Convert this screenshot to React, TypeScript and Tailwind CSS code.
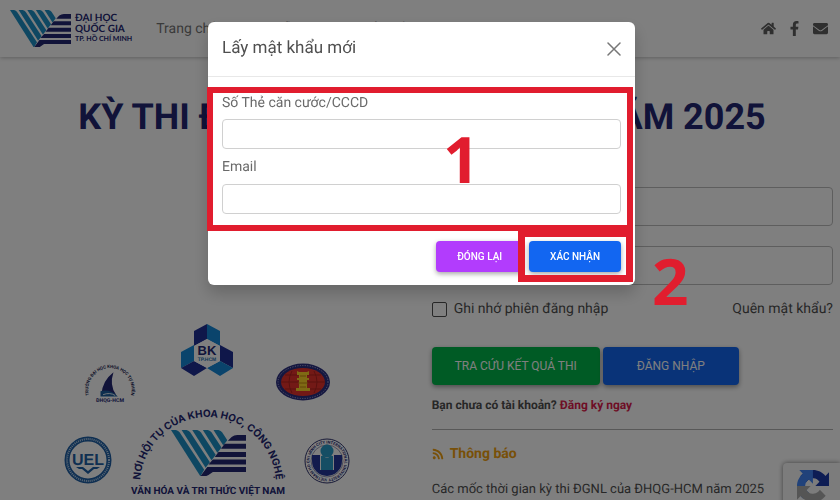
import { useId } from 'react';
import { FaEnvelope, FaFacebookF, FaHome, FaRss, FaUserCircle } from 'react-icons/fa';

const NAV_ITEMS = ['Trang chủ', 'Hướng dẫn', 'Tra cứu kết quả'];

const SOCIAL_LINKS = [
  { label: 'Trang chủ', Icon: FaHome },
  { label: 'Facebook', Icon: FaFacebookF },
  { label: 'Email', Icon: FaEnvelope },
];

// Striped "V" emblem of VNU-HCM
function VnuMark({ className }: { className?: string }) {
  const id = useId();
  return (
    <svg viewBox="0 0 120 74" className={className} aria-hidden="true">
      <clipPath id={id}>
        <path d="M0 0H92V14L54 62L47 74H0Z" />
      </clipPath>
      <g fill="#1c8fc4" clipPath={`url(#${id})`}>
        {[0, 17, 34, 51, 68].map((x) => (
          <path key={x} transform={`translate(${x} 0)`} d="M0 0H8Q12 1 14 4L60 74H47Z" />
        ))}
      </g>
      <g fill="#222672">
        <path d="M91 17L97 11Q101 8 106 8H120V17Z" />
        <path d="M86 22H120V30H80Z" />
        <path d="M76 35H120V43H70Z" />
        <path d="M67 47H120V55H60Z" />
        <path d="M58 59H120V67H67L60 72Q57 74 53 74H47Z" />
      </g>
    </svg>
  );
}

function ScienceLogo() {
  const id = useId();
  return (
    <svg viewBox="0 0 60 51" className="w-[52px]" aria-label="Trường Đại học Khoa học Tự nhiên">
      <path id={id} d="M7 44A25 25 0 1 1 53 44" fill="none" />
      <text fill="#20244f" fontSize="5" fontWeight="700" fontFamily="Roboto, sans-serif" textAnchor="middle">
        <textPath href={`#${id}`} startOffset="50%">TRƯỜNG ĐẠI HỌC KHOA HỌC TỰ NHIÊN</textPath>
      </text>
      <path d="M34 14Q21 24 20 40H37Q29 29 34 14Z" fill="#222672" />
      <path d="M19 36Q30 33 39 42H19Z" fill="#1d5f9e" />
      <path d="M22 40Q30 37 36 41" fill="none" stroke="#fff" />
      <text x="30" y="49" textAnchor="middle" fill="#222672" fontSize="6" fontWeight="700" fontFamily="Roboto, sans-serif">
        ĐHQG-HCM
      </text>
    </svg>
  );
}

function BachKhoaLogo() {
  return (
    <svg viewBox="0 0 52 52" className="w-[52px]" aria-label="Bách Khoa">
      <path d="M26 0L13 7V22L26 15Z" fill="#1f2f94" />
      <path d="M26 0L39 7V22L26 15Z" fill="#1488d8" />
      <path d="M0 28L13 21V37L0 44Z" fill="#1488d8" />
      <path d="M0 44L13 37L26 44L13 52Z" fill="#1f2f94" />
      <path d="M52 28L39 21V37L52 44Z" fill="#1f2f94" />
      <path d="M52 44L39 37L26 44L39 52Z" fill="#1488d8" />
      <path d="M26 15L39 22V37L26 44L13 37V22Z" fill="#fff" />
      <text x="26" y="31" textAnchor="middle" fill="#222672" fontSize="13" fontWeight="700" fontFamily="Liberation Sans, sans-serif">
        BK
      </text>
      <text x="26" y="37" textAnchor="middle" fill="#1d6fae" fontSize="5" fontWeight="700" fontFamily="Liberation Sans, sans-serif">
        TP.HCM
      </text>
    </svg>
  );
}

function HumanitiesLogo() {
  return (
    <svg viewBox="0 0 54 38" className="w-[54px]" aria-label="Khoa học Xã hội và Nhân văn">
      <ellipse cx="27" cy="19" rx="27" ry="18.5" fill="#2a2e80" />
      <ellipse cx="27" cy="19" rx="25" ry="16.5" fill="none" stroke="#b9bbe0" strokeWidth="1" strokeDasharray="1 1.5" />
      <ellipse cx="27" cy="19" rx="22" ry="14" fill="#e6332c" />
      <path d="M9 12H45M5 19H49M9 26H45M16 8Q10 19 16 30M38 8Q44 19 38 30" fill="none" stroke="#b3231f" />
      <path d="M21 8L23 9H31L33 8V12H31V15H33V17H31V25H34V28H20V25H23V17H21V15H23V12H21Z" fill="#ffd428" />
      <path d="M24 13H30M22 20H32M24 24H30" stroke="#c48a10" />
    </svg>
  );
}

function UelLogo() {
  return (
    <svg viewBox="0 0 48 48" className="mb-4 w-12" aria-label="UEL">
      <circle cx="24" cy="24" r="21" fill="none" stroke="#1e5fa4" strokeWidth="5" />
      <circle cx="24" cy="24" r="21" fill="none" stroke="#b6cfe8" strokeWidth="2" strokeDasharray="1 1" />
      <text x="24" y="29" textAnchor="middle" fill="#1e5fa4" fontSize="16" fontWeight="700" fontFamily="Liberation Sans, sans-serif">
        UEL
      </text>
      <path d="M12 31H19L24 35L29 31H36L33 33H30L24 38L18 33H15Z" fill="#1e5fa4" />
    </svg>
  );
}

function InternationalLogo() {
  const id = useId();
  return (
    <svg viewBox="0 0 46 46" className="mb-4 w-[46px]" aria-label="International University">
      <circle cx="23" cy="23" r="22" fill="none" stroke="#30346f" />
      <circle cx="23" cy="23" r="16" fill="none" stroke="#30346f" strokeWidth="0.5" />
      <path id={id} d="M23 40.5A17.5 17.5 0 1 1 23.1 40.5" fill="none" />
      <text fill="#222672" fontSize="4" fontWeight="700" fontFamily="Roboto, sans-serif">
        <textPath href={`#${id}`}>VIETNAM HO CHI MINH CITY INTERNATIONAL UNIVERSITY</textPath>
      </text>
      <path d="M8 17H16V32H30V17H38V23A15 15 0 0 1 8 23Z" fill="#24379a" />
      <circle cx="23" cy="13" r="6.5" fill="#2a9cc8" />
      <path d="M17 18H20Q23 22 26 18H29V32H17Z" fill="#2a9cc8" />
    </svg>
  );
}

function Motto() {
  const id = useId();
  return (
    <svg viewBox="0 0 160 96" className="w-40" role="img" aria-label="Nơi hội tụ của khoa học, công nghệ">
      <path id={id} d="M12 90V81A68 68 0 0 1 148 81V90" fill="none" />
      <text fill="#222672" fontSize="10" fontWeight="700" fontFamily="Inter, sans-serif" textAnchor="middle">
        <textPath href={`#${id}`} startOffset="50%">NƠI HỘI TỤ CỦA KHOA HỌC, CÔNG NGHỆ</textPath>
      </text>
      <text x="80" y="90" fill="#222672" fontSize="10" fontWeight="700" fontFamily="Roboto, sans-serif" textAnchor="middle">
        VĂN HÓA VÀ TRI THỨC VIỆT NAM
      </text>
    </svg>
  );
}

function RecaptchaBadge() {
  return (
    <div className="fixed right-0 bottom-[-23px] h-[60px] w-[57px] rounded-l-sm bg-[#f9f9f9] pt-[7px] pl-3.5 shadow-[0_0_5px_gray]">
      <svg viewBox="0 0 64 64" className="w-8" aria-label="reCAPTCHA">
        <path
          d="M64 31.955l-.033-1.37V4.687l-7.16 7.16C50.904 4.674 41.984.093 31.998.093c-10.4 0-19.63 4.96-25.458 12.64l11.736 11.86a15.55 15.55 0 0 1 4.754-5.334c2.05-1.6 4.952-2.906 8.968-2.906.485 0 .86.057 1.135.163 4.976.393 9.288 3.14 11.828 7.124l-8.307 8.307L64 31.953"
          fill="#1c3aa9"
        />
        <path
          d="M31.862.094l-1.37.033H4.594l7.16 7.16C4.582 13.147 0 22.067 0 32.054c0 10.4 4.96 19.63 12.64 25.458L24.5 45.775a15.55 15.55 0 0 1-5.334-4.754c-1.6-2.05-2.906-4.952-2.906-8.968 0-.485.057-.86.163-1.135.393-4.976 3.14-9.288 7.124-11.828l8.307 8.307L31.86.095"
          fill="#4285f4"
        />
        <path
          d="M.001 32.045l.033 1.37v25.898l7.16-7.16c5.86 7.173 14.78 11.754 24.767 11.754 10.4 0 19.63-4.96 25.458-12.64L45.683 39.407a15.55 15.55 0 0 1-4.754 5.334c-2.05 1.6-4.952 2.906-8.968 2.906-.485 0-.86-.057-1.135-.163-4.976-.393-9.288-3.14-11.828-7.124l8.307-8.307c-10.522.04-22.4.066-27.295-.005"
          fill="#ababab"
        />
      </svg>
    </div>
  );
}

function LoginForm() {
  return (
    <form className="flex flex-col" onSubmit={(e) => e.preventDefault()}>
      <input aria-label="Tài khoản" className="h-[39px] rounded-sm border border-[#bdbdbd]" />
      <input aria-label="Mật khẩu" type="password" className="mt-5 h-[39px] rounded-sm border border-[#bdbdbd]" />
      <div className="mt-3.5 flex items-center justify-between text-sm leading-5 text-[#4f4f4f]">
        <label className="flex items-center gap-[7px]">
          <input type="checkbox" className="size-[15px] appearance-none rounded-xs border border-[#4f4f4f]" />
          Ghi nhớ phiên đăng nhập
        </label>
        <a href="#forgot">Quên mật khẩu?</a>
      </div>
      <div className="mt-7 flex gap-[3px]">
        <button type="button" className="h-[38px] rounded bg-[#00b74a] px-[23px] text-xs text-white shadow-[0_2px_5px_rgba(0,0,0,0.4)]">
          TRA CỨU KẾT QUẢ THI
        </button>
        <button className="h-[38px] rounded bg-[#1266f1] px-[34px] text-xs text-white shadow-[0_2px_5px_rgba(0,0,0,0.4)]">
          ĐĂNG NHẬP
        </button>
      </div>
      <p className="mt-3 text-xs leading-4 font-bold text-[#4f4f4f]">
        Bạn chưa có tài khoản? <a href="#register" className="text-[#dc1c4c]">Đăng ký ngay</a>
      </p>
      <hr className="mt-4 border-[#b0b0b0]" />
      <h2 className="mt-3.5 flex items-center gap-1.5 text-sm leading-5 font-bold text-[#f0a010]">
        <FaRss className="size-3" />
        Thông báo
      </h2>
      <p className="mt-4 text-[13px] leading-5 whitespace-nowrap text-[#4f4f4f]">
        Các mốc thời gian kỳ thi ĐGNL của ĐHQG-HCM năm 2025
      </p>
    </form>
  );
}

function ResetPasswordModal() {
  return (
    <div className="fixed inset-0 bg-black/50 pt-[22px] pl-[3px]">
      <div role="dialog" aria-labelledby="reset-title" className="relative mx-auto w-[427px] rounded-md bg-white text-[#4f4f4f] shadow-[0_8px_16px_rgba(0,0,0,0.2)]">
        <div className="flex h-[55px] items-center justify-between border-b border-[#e8e8e8] px-3.5">
          <h2 id="reset-title" className="text-[17px]">Lấy mật khẩu mới</h2>
          <button aria-label="Đóng">
            <svg viewBox="0 0 14 14" className="w-3.5" fill="none" stroke="#777" strokeWidth="1.5" strokeLinecap="round">
              <path d="M1 1L13 13M13 1L1 13" />
            </svg>
          </button>
        </div>
        <div className="flex flex-col px-3.5 pt-4 pb-[17px] text-sm leading-5 text-[#6a6a6a]">
          <label htmlFor="card-id">Số Thẻ căn cước/CCCD</label>
          <input id="card-id" className="mt-1.5 mb-2 h-[30px] rounded border border-[#d0d0d0]" />
          <label htmlFor="email">Email</label>
          <input id="email" type="email" className="mt-[7px] h-[30px] rounded border border-[#d0d0d0]" />
        </div>
        <div className="flex justify-end gap-1.5 px-3.5 pt-[10px] pb-[13px] text-[10px] font-medium text-white">
          <button className="h-[31px] rounded bg-[#b23cfd] px-[21px] shadow-[0_2px_5px_rgba(0,0,0,0.35)]">ĐÓNG LẠI</button>
          <button className="h-[31px] rounded bg-[#1266f1] px-[21px] shadow-[0_2px_5px_rgba(0,0,0,0.35)]">XÁC NHẬN</button>
        </div>

        {/* Step markers */}
        <div className="pointer-events-none absolute top-[65px] right-[2px] left-[-1px] h-[144px] border-[6px] border-[#e11d2e]" />
        <div className="pointer-events-none absolute top-[208px] right-[2px] h-[52px] w-[115px] border-[7px] border-[#e11d2e]" />
        <span className="absolute top-[105px] left-[235px] font-['Open_Sans',sans-serif] text-[64px] leading-[64px] font-bold text-[#e11d2e]">1</span>
        <span className="absolute top-[227px] left-[444px] font-['Open_Sans',sans-serif] text-[64px] leading-[64px] font-bold text-[#e11d2e]">2</span>
      </div>
    </div>
  );
}

export default function App() {
  return (
    <div className="h-screen overflow-hidden bg-white font-[Roboto,sans-serif] [text-rendering:geometricPrecision]">
      <header className="flex h-[57px] items-center pr-3 pl-2.5 shadow-[0_1px_4px_rgba(0,0,0,0.25)]">
        <a href="#home" className="flex items-center gap-1 text-[#222672]">
          <VnuMark className="w-[61px]" />
          <span className="flex flex-col font-[Lato,sans-serif] text-[10px] leading-[11px] font-bold">
            <span>ĐẠI HỌC</span>
            <span>QUỐC GIA</span>
            <span className="text-[7px] leading-[8px]">TP. HỒ CHÍ MINH</span>
          </span>
        </a>
        <nav className="ml-6 flex gap-3 text-sm text-[#757575]">
          {NAV_ITEMS.map((item) => (
            <a key={item} href="#nav">{item}</a>
          ))}
          <a href="#login" className="flex items-center gap-1.5">
            <FaUserCircle className="text-[#222672]" />
            Đăng nhập
          </a>
        </nav>
        <div className="ml-auto flex items-center gap-[11px] text-[#5f5f5f]">
          {SOCIAL_LINKS.map(({ label, Icon }) => (
            <a key={label} href="#social" aria-label={label}>
              <Icon className="size-[15px]" />
            </a>
          ))}
        </div>
      </header>

      <h1 className="pt-9 pl-1 text-center text-4xl leading-[48px] font-bold whitespace-nowrap text-[#222672]">
        KỲ THI ĐÁNH GIÁ NĂNG LỰC – NĂM 2025
      </h1>

      <main className="grid grid-cols-[51fr_49fr] gap-3.5 pt-[46px] pr-[7px]">
        <section className="flex flex-col items-center pt-[137px] pr-[3px]">
          <BachKhoaLogo />
          <div className="-mt-4 flex w-[246px] items-center justify-between">
            <ScienceLogo />
            <HumanitiesLogo />
          </div>
          <div className="flex items-end gap-4">
            <UelLogo />
            <div className="relative">
              <Motto />
              <VnuMark className="absolute top-[26px] left-[43px] w-[75px]" />
            </div>
            <InternationalLogo />
          </div>
        </section>
        <LoginForm />
      </main>

      <RecaptchaBadge />
      <ResetPasswordModal />
    </div>
  );
}
